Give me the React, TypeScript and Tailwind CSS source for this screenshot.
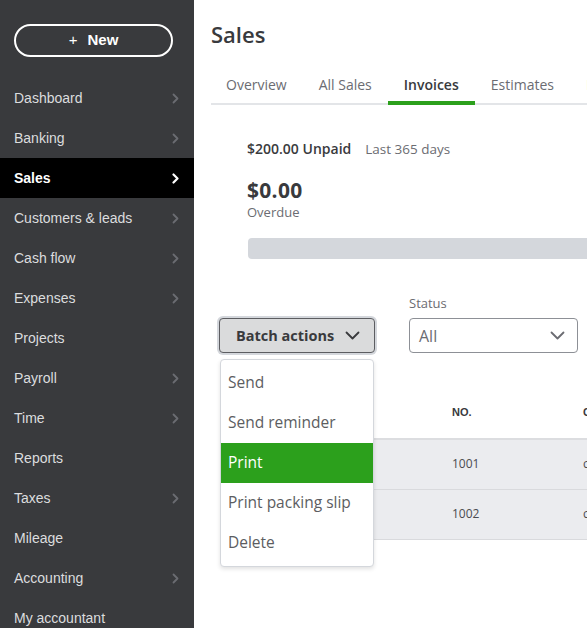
import React from 'react';

const navItems = [
  { label: 'Dashboard', arrow: true },
  { label: 'Banking', arrow: true },
  { label: 'Sales', arrow: true, active: true },
  { label: 'Customers & leads', arrow: true },
  { label: 'Cash flow', arrow: true },
  { label: 'Expenses', arrow: true },
  { label: 'Projects', arrow: false },
  { label: 'Payroll', arrow: true },
  { label: 'Time', arrow: true },
  { label: 'Reports', arrow: false },
  { label: 'Taxes', arrow: true },
  { label: 'Mileage', arrow: false },
  { label: 'Accounting', arrow: true },
  { label: 'My accountant', arrow: false },
];

const tabs = ['Overview', 'All Sales', 'Invoices', 'Estimates', 'Products and services'];

const batchItems = ['Send', 'Send reminder', 'Print', 'Print packing slip', 'Delete'];

const rows = [
  { no: '1001', customer: 'cool Cars' },
  { no: '1002', customer: 'cool Cars' },
];

function NavChevron({ active }: { active?: boolean }) {
  return (
    <svg width="7" height="11" viewBox="0 0 7 11" fill="none">
      <polyline
        points="1.5,1.5 5.5,5.5 1.5,9.5"
        stroke={active ? '#ffffff' : '#6b6c72'}
        strokeWidth={active ? 2.2 : 1.8}
        strokeLinecap="round"
        strokeLinejoin="round"
      />
    </svg>
  );
}

function ChevronDown({ color = '#393a3d' }: { color?: string }) {
  return (
    <svg width="15" height="9" viewBox="0 0 15 9" fill="none">
      <polyline
        points="1.5,1.5 7.5,7.5 13.5,1.5"
        stroke={color}
        strokeWidth="1.8"
        strokeLinecap="round"
        strokeLinejoin="round"
      />
    </svg>
  );
}

function Sidebar() {
  return (
    <aside className="w-[194px] shrink-0 h-full bg-[#393a3d] font-['Liberation_Sans',Arial,sans-serif]">
      <div className="px-[14px] pt-[24px] pb-[21px]">
        <button className="w-[159px] h-[33px] rounded-full border-2 border-white text-white text-[15px] font-bold flex items-center justify-center gap-[10px]">
          <span className="font-normal text-[15px]">+</span>
          <span>New</span>
        </button>
      </div>
      <nav className="flex flex-col">
        {navItems.map((item) => (
          <div
            key={item.label}
            className={`h-[40px] flex items-center justify-between pl-[14px] pr-[15px] text-[14px] ${
              item.active ? 'bg-black text-white font-bold' : 'text-[#dcdddf]'
            }`}
          >
            <span>{item.label}</span>
            {item.arrow && <NavChevron active={item.active} />}
          </div>
        ))}
      </nav>
    </aside>
  );
}

export default function App() {
  return (
    <div className="w-[587px] h-[628px] flex overflow-hidden bg-white">
      <Sidebar />
      <main className="relative flex-1 min-w-0 overflow-hidden pl-[17px] pt-[20px] font-['Open_Sans',sans-serif] text-[#393a3d]">
        <h1 className="text-[22px] leading-[28px] font-semibold text-[#393a3d]">Sales</h1>

        <div className="mt-[18px] flex border-b-2 border-[#e3e5e8] w-[800px]">
          {tabs.map((t, i) => {
            const active = t === 'Invoices';
            return (
              <div
                key={t}
                className={`${i === 0 ? 'pl-[15px]' : 'pl-4'} pr-4 pt-[9px] pb-[6px] -mb-[2px] whitespace-nowrap text-[14px] leading-[20px] border-b-4 ${
                  active ? 'border-[#2ca01c] text-[#393a3d] font-semibold' : 'border-transparent text-[#6b6c72]'
                }`}
              >
                {t}
              </div>
            );
          })}
        </div>

        <section className="ml-[36px] mt-[35px] w-[600px]">
          <div className="flex items-baseline gap-[14px] leading-[18px]">
            <span className="text-[14px] font-semibold text-[#393a3d]">$200.00 Unpaid</span>
            <span className="text-[13.5px] text-[#6b6c72]">Last 365 days</span>
          </div>
          <div className="mt-[18px] text-[21px] leading-[28px] font-bold tracking-[0.3px] text-[#393a3d]">$0.00</div>
          <div className="text-[13px] leading-[17px] text-[#6b6c72]">Overdue</div>
          <div className="mt-[17px] ml-[1px] h-[21px] rounded-[4px] bg-[#d4d7dc]" />
        </section>

        <div className="mt-[36px] ml-[8px] flex items-end gap-[34px]">
          <div className="relative">
            <button className="w-[156px] h-[35px] rounded-[4px] border border-[#5c5d61] bg-[#dadbdc] ring-2 ring-[#d4d7dc] flex items-center justify-between pl-[16px] pr-[14px] text-[14.5px] font-bold text-[#393a3d]">
              <span>Batch actions</span>
              <ChevronDown />
            </button>
            <div className="absolute z-10 left-[1px] top-[41px] w-[154px] bg-white border border-[#d4d7dc] rounded-[4px] shadow-[0_2px_4px_rgba(0,0,0,0.12)] pt-[3px] pb-[3px]">
              {batchItems.map((b) => (
                <div
                  key={b}
                  className={`h-[40px] flex items-center pl-[7px] text-[15.5px] whitespace-nowrap ${
                    b === 'Print' ? 'bg-[#2ca01c] text-white' : 'text-[#5c5d61]'
                  }`}
                >
                  {b}
                </div>
              ))}
            </div>
          </div>
          <div className="flex flex-col">
            <label className="text-[13px] leading-[16px] text-[#6b6c72]">Status</label>
            <div className="mt-[7px] w-[169px] h-[35px] rounded-[4px] border border-[#8d9096] flex items-center justify-between pl-[9px] pr-[12px]">
              <span className="text-[16px] text-[#6b6c72]">All</span>
              <ChevronDown color="#6b6c72" />
            </div>
          </div>
        </div>

        <table className="mt-[33px] ml-[10px] w-[700px] border-collapse text-left">
          <thead>
            <tr className="h-[53px] border-b-2 border-[#dcdde0]">
              <th className="w-[231px]" />
              <th className="w-[131px] text-[11px] font-bold text-[#393a3d] font-['Liberation_Sans',Arial,sans-serif]">NO.</th>
              <th className="text-[11px] font-bold text-[#393a3d] font-['Liberation_Sans',Arial,sans-serif]">CUSTOMER</th>
            </tr>
          </thead>
          <tbody>
            {rows.map((r) => (
              <tr key={r.no} className="h-[50px] bg-[#ebecef] border-b border-[#d9dadd]">
                <td />
                <td className="text-[12px] text-[#4a4b4f]">{r.no}</td>
                <td className="text-[12px] text-[#4a4b4f]">{r.customer}</td>
              </tr>
            ))}
          </tbody>
        </table>
      </main>
    </div>
  );
}
